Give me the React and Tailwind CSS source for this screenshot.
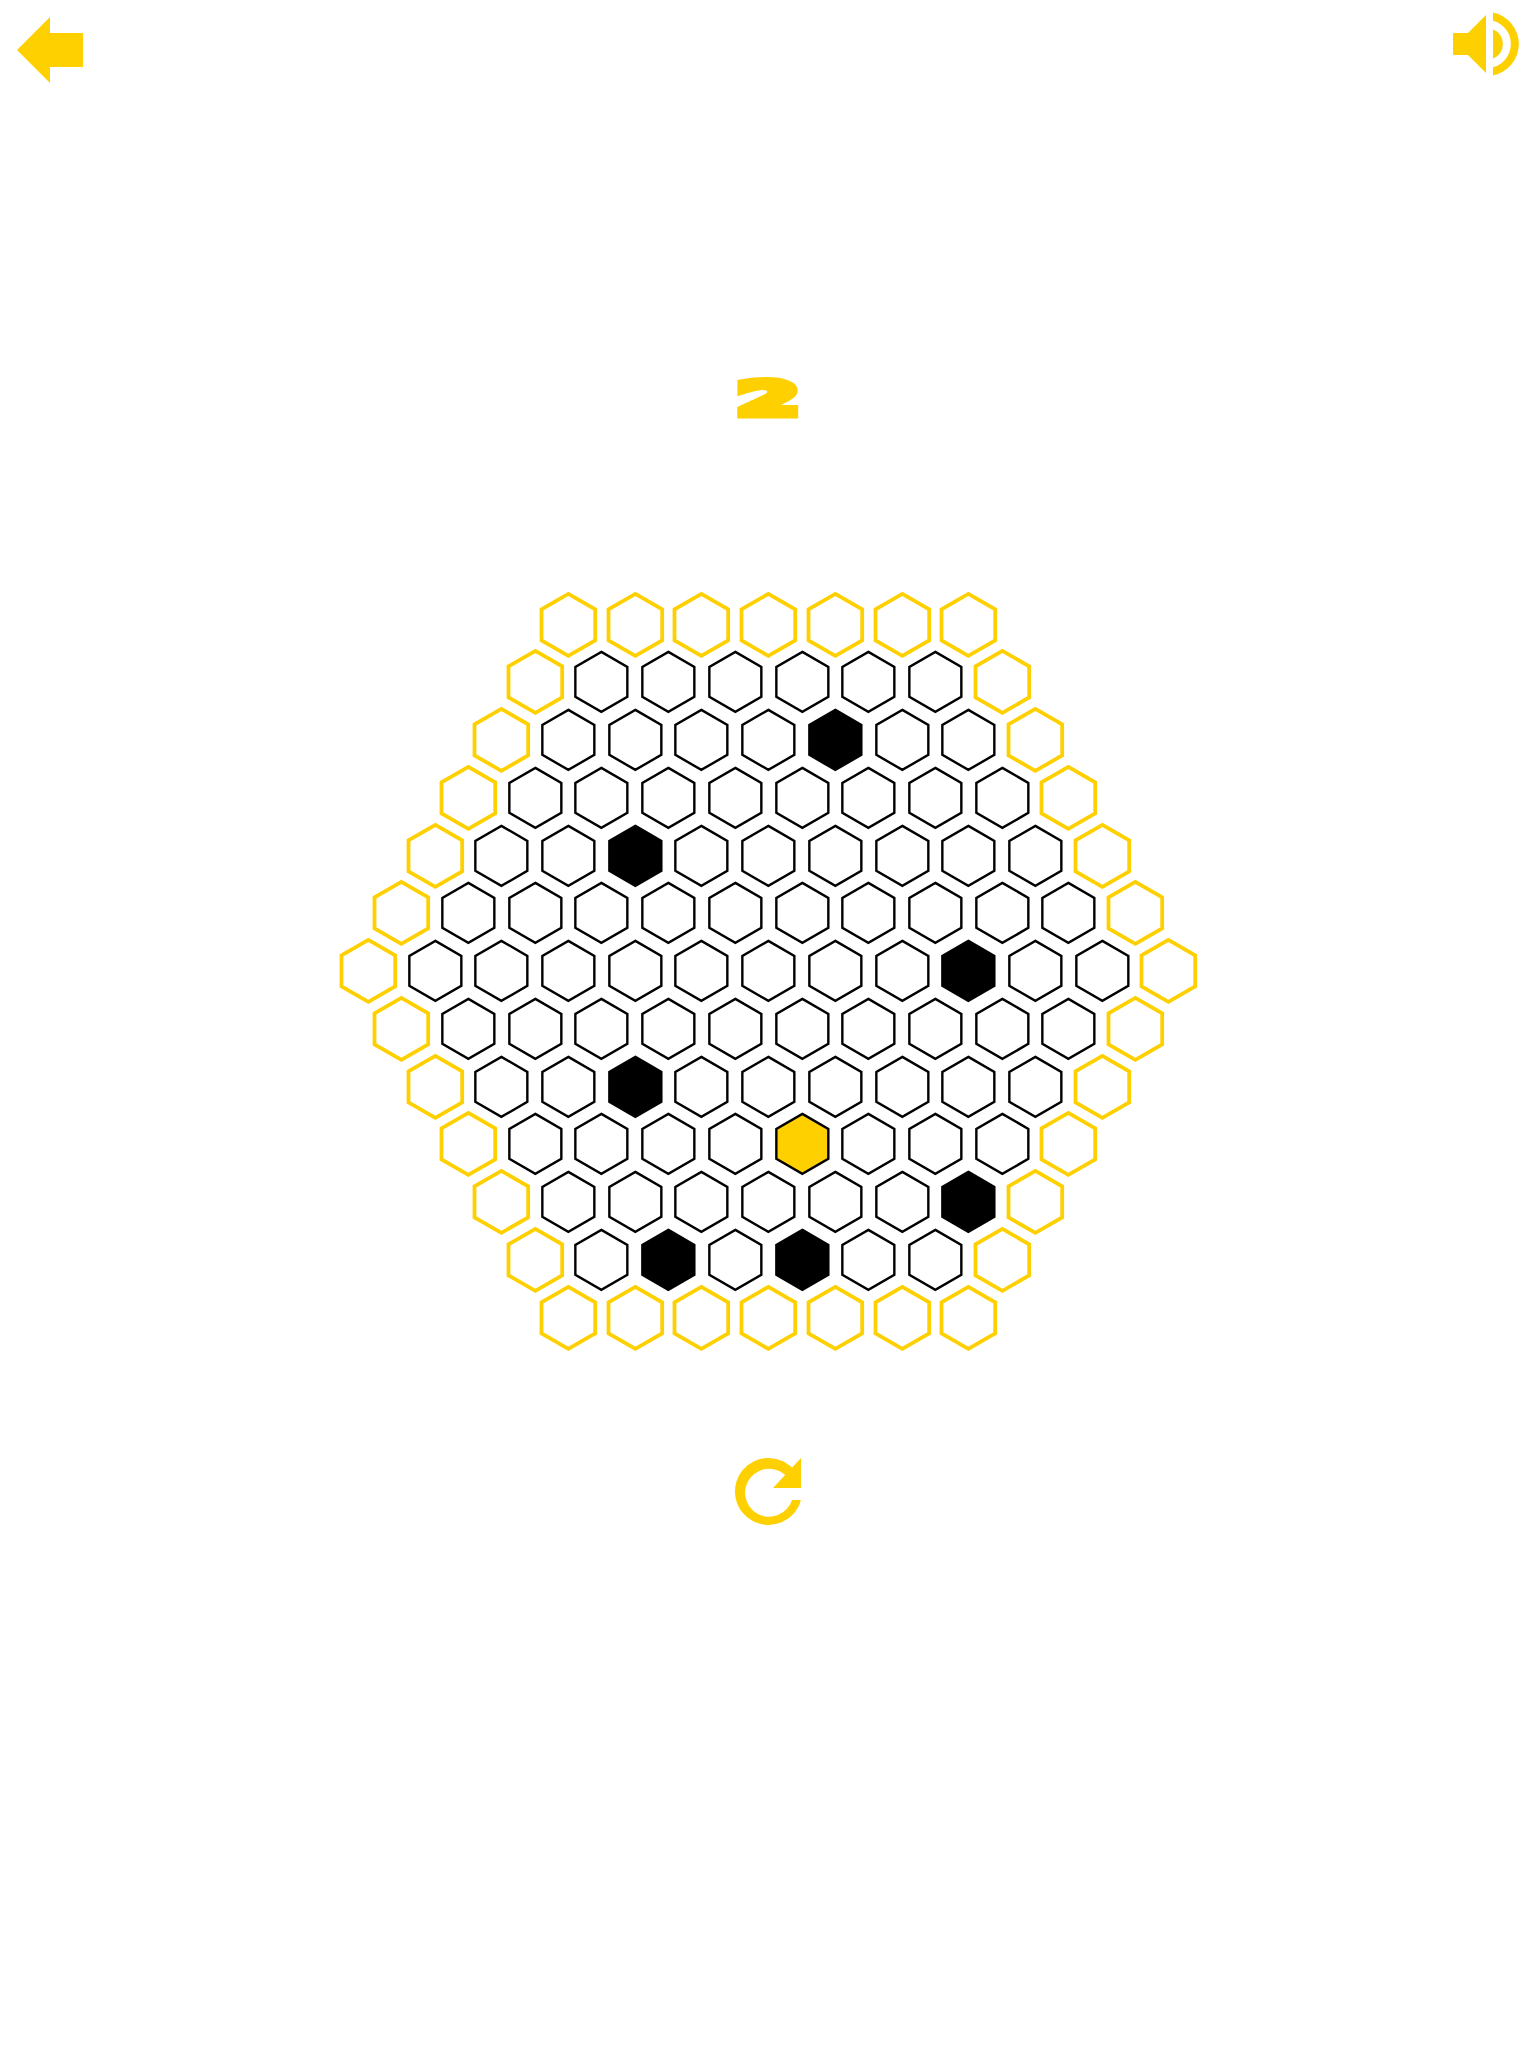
const BOARD = [
  "yyyyyyy",
  "yooooooy",
  "yoooobooy",
  "yooooooooy",
  "yoobooooooy",
  "yooooooooooy",
  "yoooooooobooy",
  "yooooooooooy",
  "yoobooooooy",
  "yoooofoooy",
  "yooooooby",
  "yobobooy",
  "yyyyyyy",
];

// black cells use a slightly smaller hexagon than the yellow rim
const INNER = "0,-30 26,-15 26,15 0,30 -26,15 -26,-15";
const RIM = "0,-31 26.85,-15.5 26.85,15.5 0,31 -26.85,15.5 -26.85,-15.5";

const Hex = ({ kind }) => (
  <svg viewBox="-33.35 -28.875 66.7 57.75" className="w-[66.7px] h-[57.75px] shrink-0 overflow-visible">
    {kind === "y" && <polygon points={RIM} fill="#fff" stroke="#ffd000" strokeWidth="3.8" />}
    {kind === "o" && <polygon points={INNER} fill="#fff" stroke="#000" strokeWidth="2.4" />}
    {kind === "b" && <polygon points={INNER} fill="#000" stroke="#000" strokeWidth="2.4" />}
    {kind === "f" && <polygon points={INNER} fill="#ffd000" stroke="#000" strokeWidth="2.4" />}
  </svg>
);

const BackArrow = () => (
  <svg viewBox="0 0 66 66" className="w-[66px] h-[66px]">
    <polygon points="0,33 33,0 33,16 66,16 66,50 33,50 33,66" fill="#ffd000" />
  </svg>
);

const Speaker = () => (
  <svg viewBox="0 0 66 64" className="w-[66px] h-[64px]">
    <polygon points="0,21 15,21 33,3 33,61 15,43 0,43" fill="#ffd000" />
    <path d="M40 17.2A16 16 0 0 1 40 46.8Z" fill="#ffd000" />
    <path d="M40 0.6A32 32 0 0 1 40 63.4V55.2A24 24 0 0 0 40 8.8Z" fill="#ffd000" />
  </svg>
);

const Refresh = () => (
  <svg viewBox="0 0 67 67" className="w-[67px] h-[67px]">
    <path d="M65.9 42A33.5 33.5 0 1 1 60 13L53 20A24 24 0 1 0 57 42Z" fill="#ffd000" />
    <polygon points="66,0 66,30 38,30" fill="#ffd000" />
  </svg>
);

export default function App() {
  return (
    <div className="w-[1536px] h-[2048px] bg-white flex flex-col">
      <div className="flex justify-between items-start pt-[12px] pl-[17px] pr-[17px]">
        <div className="pt-[5px]">
          <BackArrow />
        </div>
        <Speaker />
      </div>
      <div className="mt-[283px] h-[60px] flex items-center justify-center">
        <span className="inline-block translate-y-[3px] scale-x-[1.94] text-[#ffd000] text-[46px] leading-none font-bold [-webkit-text-stroke:7px_#ffd000] [font-family:'DejaVu_Sans',sans-serif]">
          2
        </span>
      </div>
      <div className="mt-[169.6px] pl-[1px] flex flex-col items-center">
        {BOARD.map((row, i) => (
          <div key={i} className="flex justify-center h-[57.75px]">
            {row.split("").map((kind, j) => (
              <Hex key={j} kind={kind} />
            ))}
          </div>
        ))}
      </div>
      <div className="mt-[111.6px] flex justify-center">
        <Refresh />
      </div>
    </div>
  );
}
